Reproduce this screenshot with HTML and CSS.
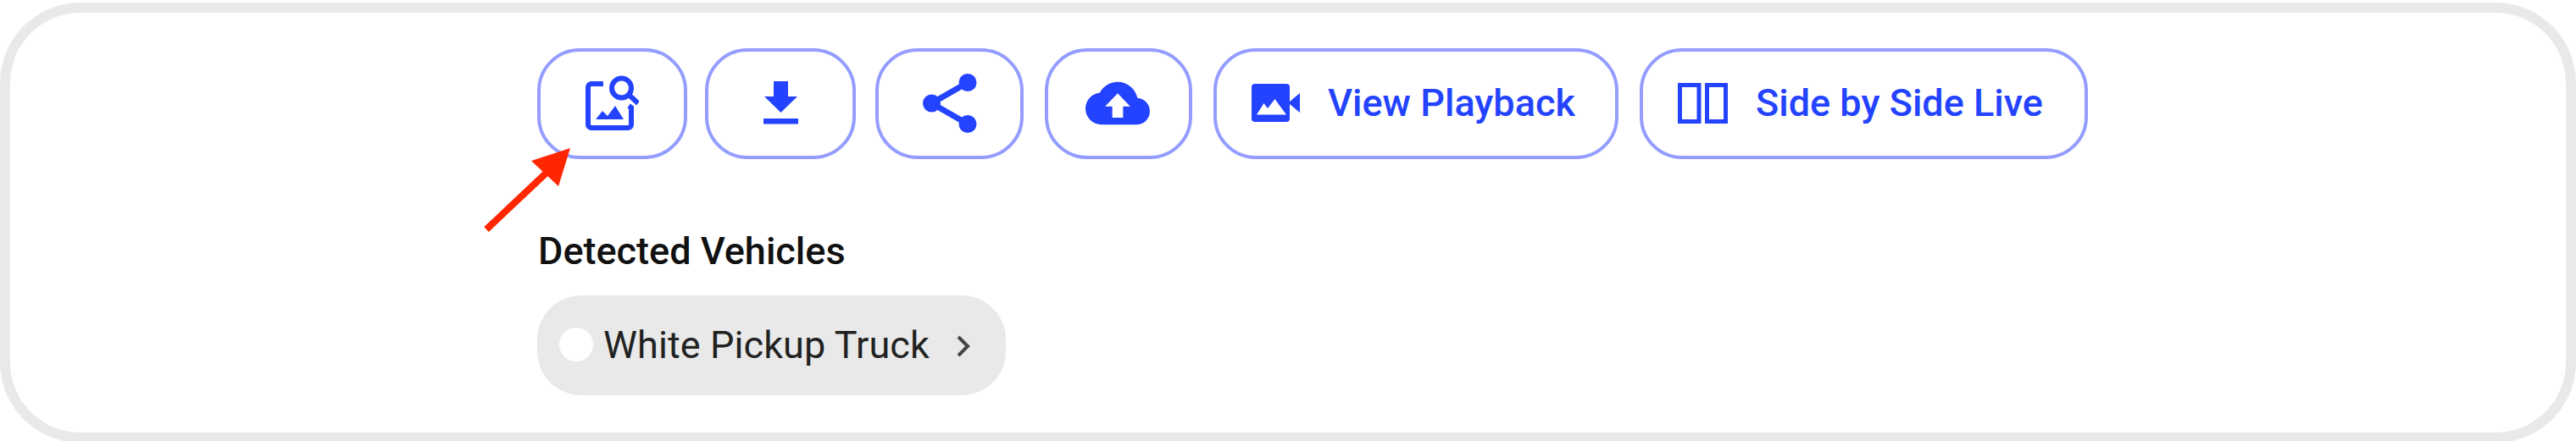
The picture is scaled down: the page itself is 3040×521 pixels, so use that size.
FILE: index.html
```html
<!DOCTYPE html>
<html lang="en">
<head>
    <meta charset="UTF-8">
    <meta name="viewport" content="width=device-width, initial-scale=1.0">
    <title>Detected Vehicles</title>
    <link rel="stylesheet" href="styles.css">
</head>
<body>
    <div class="card">
        <div class="toolbar">
            <button class="btn search" aria-label="Search image">
                <svg width="66" height="66" viewBox="0 0 66 66">
                    <path d="M24 10H10a4 4 0 0 0-4 4v44a4 4 0 0 0 4 4h43a4 4 0 0 0 4-4V38l-3-2" fill="none" stroke="currentColor" stroke-width="6"/>
                    <path d="M15 52l8-10 6 6 9-12 10 16z" fill="currentColor"/>
                    <circle cx="45.500" cy="15" r="11.500" fill="none" stroke="currentColor" stroke-width="6"/>
                    <path d="M53 22l12 11" stroke="currentColor" stroke-width="6"/>
                </svg>
            </button>
            <button class="btn download" aria-label="Download">
                <svg width="42" height="52" viewBox="0 0 42 52">
                    <path d="M13 0h17v18h11L21.500 37 2 18h11zM1 44h41v6.500H1z" fill="currentColor"/>
                </svg>
            </button>
            <button class="btn share" aria-label="Share">
                <svg width="64" height="70" viewBox="0 0 64 70">
                    <path d="M53 10.500L10.500 35 53 59.500" fill="none" stroke="currentColor" stroke-width="7"/>
                    <circle cx="53" cy="10.500" r="10.500" fill="currentColor"/>
                    <circle cx="10.500" cy="35" r="10.500" fill="currentColor"/>
                    <circle cx="53" cy="59.500" r="10.500" fill="currentColor"/>
                </svg>
            </button>
            <button class="btn upload" aria-label="Upload">
                <svg width="76" height="76" viewBox="0 0 24 24">
                    <path d="M19.350 10.040C18.670 6.590 15.640 4 12 4 9.110 4 6.600 5.640 5.350 8.040 2.340 8.360 0 10.910 0 14c0 3.310 2.690 6 6 6h13c2.760 0 5-2.240 5-5 0-2.640-2.050-4.780-4.650-4.960zM14 13.200v4.200h-4v-4.200H7.300L12 8.300l4.700 4.900z" fill="currentColor"/>
                </svg>
            </button>
            <button class="btn playback">
                <svg width="58" height="46" viewBox="0 0 58 46">
                    <path fill-rule="evenodd" d="M4 0h37a4 4 0 0 1 4 4v17L57 11v23L45 24v17a4 4 0 0 1-4 4H4a4 4 0 0 1-4-4V4a4 4 0 0 1 4-4zM6 36.500h35L27.500 18l-8.500 11-4.500-6z" fill="currentColor"/>
                </svg>
                <span class="btn-text">View Playback</span>
            </button>
            <button class="btn live">
                <svg width="60" height="48" viewBox="0 0 60 48">
                    <path d="M2.500 2.500H25v43H2.500zM34.500 2.500H56.500v43H34.500z" fill="none" stroke="currentColor" stroke-width="5"/>
                </svg>
                <span class="btn-text">Side by Side Live</span>
            </button>
        </div>
        <h2>Detected Vehicles</h2>
        <button class="vehicle">
            <span class="dot"></span>
            <span class="vehicle-text">White Pickup Truck</span>
            <svg width="18" height="28" viewBox="0 0 18 28">
                <path d="M3 3l11 11L3 25" fill="none" stroke="currentColor" stroke-width="4"/>
            </svg>
        </button>
        <svg class="arrow" width="106" height="104" viewBox="0 0 106 104">
            <path d="M4 99L76 31" stroke="#ff2600" stroke-width="8"/>
            <path d="M103 3L57 18l32 30z" fill="#ff2600"/>
        </svg>
    </div>
</body>
</html>
```
FILE: styles.css
```css
* {
    box-sizing: border-box;
}

body {
    margin: 0;
    height: 521px;
    overflow: hidden;
    background-color: white;
    font-family: Roboto, sans-serif;
}

.card {
    position: relative;
    height: 520px;
    margin-top: 3px;
    padding: 42px 0 0 622px;
    border: 12px solid #e9e9e9;
    border-radius: 95px;
}

.toolbar {
    display: flex;
}

button {
    font-family: inherit;
    cursor: pointer;
}

.btn {
    display: flex;
    align-items: center;
    justify-content: center;
    height: 131px;
    padding: 0 0 2px;
    border: 4px solid #949dff;
    border-radius: 50px;
    background-color: white;
    color: #2443ff;
    font-size: 45px;
    font-weight: 500;
}

.btn svg {
    flex: none;
}

.search {
    width: 177px;
    padding-right: 4px;
}

.download {
    width: 178px;
    margin-left: 21px;
}

.share {
    width: 175px;
    margin-left: 23px;
}

.upload {
    width: 174px;
    margin-left: 25px;
    padding-right: 2px;
}

.playback {
    width: 478px;
    margin-left: 25px;
    padding-left: 41px;
    justify-content: flex-start;
}

.live {
    width: 529px;
    margin-left: 25px;
    padding-left: 41px;
    justify-content: flex-start;
}

.btn-text {
    margin-left: 32px;
}

h2 {
    margin: 82px 0 0 1px;
    color: #111;
    font-size: 45px;
    font-weight: 500;
    line-height: 54px;
}

.vehicle {
    display: flex;
    align-items: center;
    width: 553px;
    height: 118px;
    margin-top: 25px;
    padding: 0 0 2px 26px;
    border: none;
    border-radius: 52px;
    background-color: #e9e9e9;
    color: #222;
    font-size: 45px;
    letter-spacing: 0.1px;
}

.dot {
    width: 40px;
    height: 40px;
    border-radius: 50%;
    background-color: white;
}

.vehicle-text {
    margin-left: 12px;
}

.vehicle svg {
    margin-left: 31px;
    margin-top: 4px;
    color: #444;
}

/* pointer drawn over the first button */
.arrow {
    position: absolute;
    left: 558px;
    top: 157px;
}
```
